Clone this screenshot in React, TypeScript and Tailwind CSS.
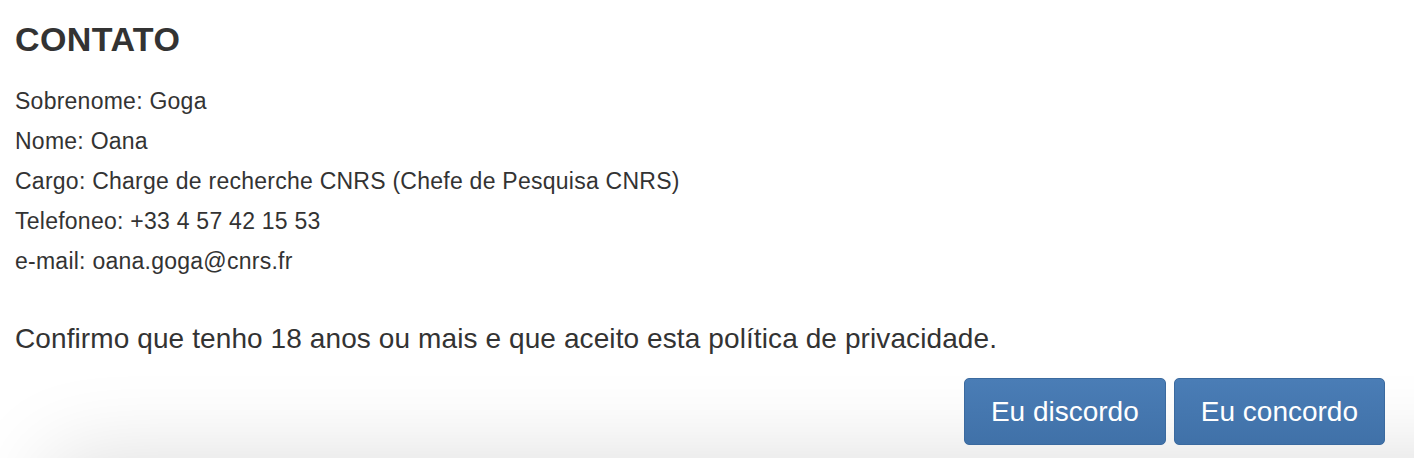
import React from "react";

export default function App() {
  const rows = [
    "Sobrenome: Goga",
    "Nome: Oana",
    "Cargo: Charge de recherche CNRS (Chefe de Pesquisa CNRS)",
    "Telefoneo: +33 4 57 42 15 53",
    "e-mail: oana.goga@cnrs.fr",
  ];
  return (
    <div
      className="relative h-[458px] w-full overflow-hidden bg-white text-[#333333]"
      style={{ fontFamily: '"Liberation Sans", Arial, Helvetica, sans-serif' }}
    >
      <div className="pointer-events-none absolute left-[70px] right-[-200px] top-[478px] h-[200px] shadow-[0_0_90px_20px_rgba(0,0,0,0.14)]" />
      <div className="relative flex flex-col pl-[15px] pr-[29px] pt-[21px]">
        <h1 className="m-0 text-[34px] font-bold leading-[36px] tracking-[0.4px]">CONTATO</h1>
        <div className="mt-[24px] flex flex-col">
          {rows.map((r) => (
            <div key={r} className="text-[23px] leading-[40px] tracking-[0.25px]">
              {r}
            </div>
          ))}
        </div>
        <p className="mt-[41px] text-[28px] leading-[34px] tracking-[0.1px]">
          Confirmo que tenho 18 anos ou mais e que aceito esta política de privacidade.
        </p>
        <div className="mt-[22px] flex justify-end gap-[8px]">
          <button className="h-[67px] rounded-[5px] border border-[#3b6a9f] bg-gradient-to-b from-[#4a7db6] to-[#4071a8] px-[26px] text-[28px] leading-none text-white">
            Eu discordo
          </button>
          <button className="h-[67px] rounded-[5px] border border-[#3b6a9f] bg-gradient-to-b from-[#4a7db6] to-[#4071a8] px-[26px] text-[28px] leading-none text-white">
            Eu concordo
          </button>
        </div>
      </div>
    </div>
  );
}
